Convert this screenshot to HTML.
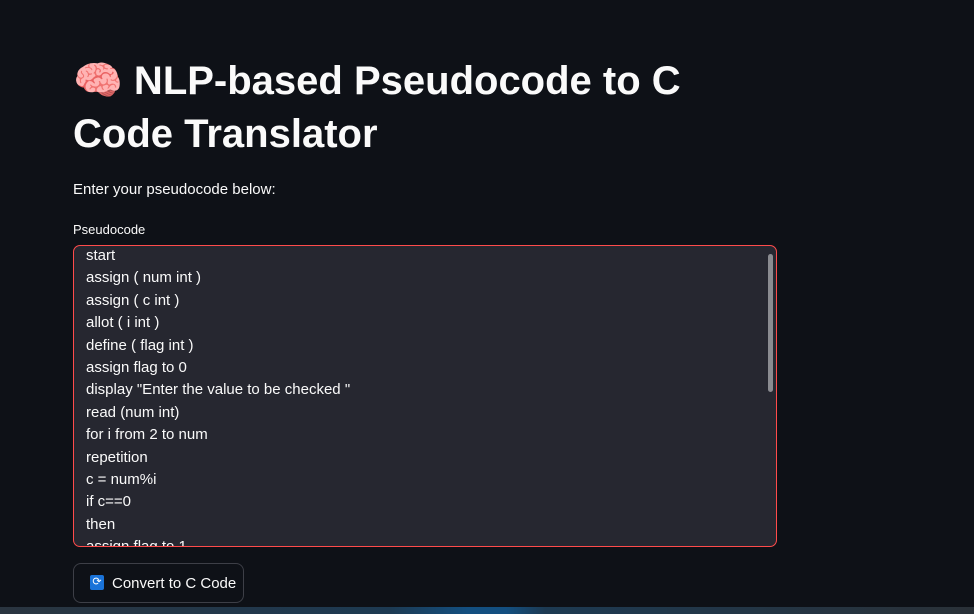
<html><head><style>
body{margin:0;width:974px;height:614px;background:#0e1117;overflow:hidden;position:relative;font-family:"Liberation Sans","DejaVu Sans",sans-serif;color:#fafafa}
h1{position:absolute;left:73px;top:54px;margin:0;font-size:40px;line-height:53px;font-weight:bold;width:660px;letter-spacing:0}
.p{position:absolute;left:73px;top:181px;font-size:15px}
.l{position:absolute;left:73px;top:222px;font-size:13px}
.ta{position:absolute;left:73px;top:245px;width:702px;height:300px;background:#262730;border:1px solid #ff4b4b;border-radius:7px;overflow:hidden}
.ta pre{margin:0;padding:0 0 0 12px;position:absolute;top:0;font-family:"Liberation Sans",sans-serif;font-size:15px;line-height:22.4px;color:#fafafa}
.sb{position:absolute;right:3px;top:8px;width:5px;height:138px;background:#8a8b90;border-radius:3px}
.btn{position:absolute;left:73px;top:563px;width:169px;height:38px;border:1px solid #3d3f47;border-radius:8px;font-size:15px;line-height:38px}
.ic{position:absolute;left:16px;top:11px;width:14px;height:15px;background:#1a73d9;border-radius:2px;color:#fff;font-size:11px;line-height:15px;text-align:center}
.bar{position:absolute;left:0;top:607px;width:974px;height:7px;background:linear-gradient(90deg,#2a3540,#1d3a52 40%,#134f80 48%,#134f80 52%,#1d3a52 56%,#2a3138)}
</style></head><body>
<h1><span style="font-family:'Noto Color Emoji','DejaVu Sans',sans-serif">🧠</span> NLP-based Pseudocode to C Code Translator</h1>
<div class="p">Enter your pseudocode below:</div>
<div class="l">Pseudocode</div>
<div class="ta"><pre style="top:-1px">start
assign ( num int )
assign ( c int )
allot ( i int )
define ( flag int )
assign flag to 0
display "Enter the value to be checked "
read (num int)
for i from 2 to num
repetition
c = num%i
if c==0
then
assign flag to 1</pre><div class="sb"></div></div>
<div class="btn"><div class="ic">⟳</div><span style="position:absolute;left:38px;top:1px">Convert to C Code</span></div>
<div class="bar"></div>
</body></html>
